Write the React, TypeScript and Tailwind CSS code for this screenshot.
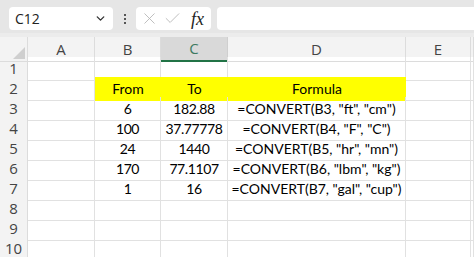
import { ChevronDown, X, Check } from "lucide-react";

const cols = ["A", "B", "C", "D", "E", ""];

const rows: string[][] = [
  ["", "", "", "", "", ""],
  ["", "From", "To", "Formula", "", ""],
  ["", "6", "182.88", '=CONVERT(B3, "ft", "cm")', "", ""],
  ["", "100", "37.77778", '=CONVERT(B4, "F", "C")', "", ""],
  ["", "24", "1440", '=CONVERT(B5, "hr", "mn")', "", ""],
  ["", "170", "77.1107", '=CONVERT(B6, "lbm", "kg")', "", ""],
  ["", "1", "16", '=CONVERT(B7, "gal", "cup")', "", ""],
  ["", "", "", "", "", ""],
  ["", "", "", "", "", ""],
  ["", "", "", "", "", ""],
];

const gridCols = "grid grid-cols-[28px_67px_66px_67px_178px_65px_1fr]";

export default function App() {
  return (
    <div className="w-[474px] h-[257px] overflow-hidden bg-white font-['Open_Sans',sans-serif]">
      {/* barra de fórmulas */}
      <div className="h-[33px] bg-[#e6e6e6] flex items-start pt-[7px] pl-[9px]">
        <div className="w-[104px] h-[23px] bg-white rounded-[4px] flex items-center pl-[6px] pr-[6px] justify-between">
          <span className="text-[14px] text-[#222]">C12</span>
          <ChevronDown size={13} strokeWidth={2.5} className="text-[#333]" />
        </div>
        <div className="w-[23px] h-[23px] flex flex-col items-center justify-center gap-[2px]">
          <span className="w-[2px] h-[2px] bg-[#555]" />
          <span className="w-[2px] h-[2px] bg-[#555]" />
          <span className="w-[2px] h-[2px] bg-[#555]" />
        </div>
        <div className="w-[75px] h-[23px] bg-white rounded-[4px] flex items-center pl-[4px] gap-[4px]">
          <X size={19} strokeWidth={1.1} className="text-[#b5b5b5]" />
          <Check size={19} strokeWidth={1.1} className="text-[#b5b5b5]" />
          <span className="ml-[5px] font-['Liberation_Serif',serif] italic text-[18px] text-[#222] leading-none">fx</span>
        </div>
        <div className="ml-[6px] flex-1 h-[23px] bg-white rounded-l-[4px]" />
      </div>
      <div className="h-[4px] bg-[#ececec]" />

      {/* cabeçalho de colunas */}
      <div className={`${gridCols} h-[20px] bg-[#f3f3f3]`}>
        <div className="relative border-r border-b border-[#dcdcdc]">
          <div className="absolute right-[2px] bottom-[2px] w-0 h-0 border-l-[12px] border-l-transparent border-b-[12px] border-b-[#cfcfcf]" />
        </div>
        {cols.map((c, i) => (
          <div
            key={i}
            className={
              c === "C"
                ? "flex items-center justify-center text-[15px] text-[#3d7a61] bg-[#d9d9d9] border-r border-[#cfcfcf] border-b-2 border-b-[#217346]"
                : "flex items-center justify-center text-[15px] text-[#444] border-r border-b border-[#dcdcdc]"
            }
          >
            {c}
          </div>
        ))}
      </div>

      {/* linhas */}
      {rows.map((r, ri) => (
        <div key={ri} className={`${gridCols} h-[20px]`}>
          <div className="flex items-center justify-center bg-[#f3f3f3] border-r border-b border-[#dcdcdc] text-[15px] text-[#444]">
            {ri + 1}
          </div>
          {r.map((v, ci) => {
            const yellow = ri === 1 && ci >= 1 && ci <= 3;
            const num = ri > 1 && (ci === 1 || ci === 2);
            return (
              <div
                key={ci}
                className={
                  (yellow
                    ? "bg-[#ffff00] border-b border-[#ffff00] "
                    : "border-r border-b border-[#e1e1e1] ") +
                  (num ? "tracking-[-0.4px] " : "") +
                  "flex items-center justify-center text-[14px] text-black font-['Lato',sans-serif] whitespace-nowrap"
                }
              >
                {v}
              </div>
            );
          })}
        </div>
      ))}
    </div>
  );
}
